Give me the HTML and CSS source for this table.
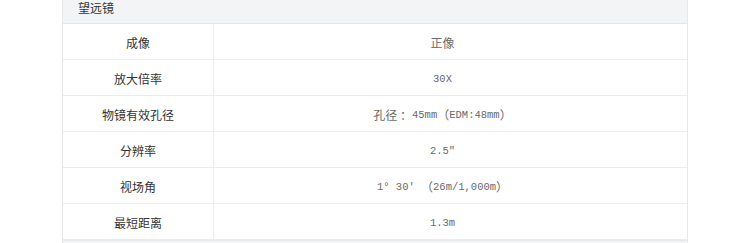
FILE: index.html
```html
<!DOCTYPE html>
<html lang="zh">
<head>
<meta charset="utf-8">
<link rel="stylesheet" href="styles.css">
</head>
<body>
<div class="spec">
  <div class="sec-head">望远镜</div>
  <div class="row"><div class="k">成像</div><div class="v">正像</div></div>
  <div class="row"><div class="k">放大倍率</div><div class="v"><span class="en">30X</span></div></div>
  <div class="row"><div class="k">物镜有效孔径</div><div class="v">孔径 ：<span class="en">45mm</span>（<span class="en">EDM:48mm</span>）</div></div>
  <div class="row"><div class="k">分辨率</div><div class="v"><span class="en">2.5″</span></div></div>
  <div class="row"><div class="k">视场角</div><div class="v"><span class="en">1° 30′ </span>（<span class="en">26m/1,000m</span>）</div></div>
  <div class="row"><div class="k">最短距离</div><div class="v"><span class="en">1.3m</span></div></div>
  <div class="sec-head next"></div>
</div>
</body>
</html>
```
FILE: styles.css
```css
html, body {
  margin: 0;
  padding: 0;
  background: #ffffff;
}
body {
  font-family: "Noto Sans CJK SC", "Noto Sans", sans-serif;
  font-size: 12px;
}
.spec {
  margin-left: 62px;
  width: 626px;
  border-left: 1px solid #e8e8ea;
  border-right: 1px solid #e8e8ea;
  box-sizing: border-box;
}
.sec-head {
  box-sizing: border-box;
  background: #f3f4f6;
  border-bottom: 1px solid #e3e4e6;
  padding: 1px 0 0 15px;
  line-height: 13px;
  color: #333333;
  height: 24px;
}
.sec-head.next {
  border-top: 1px solid #e8e8ea;
  border-bottom: 0;
  height: 10px;
}
.row {
  display: grid;
  grid-template-columns: 151px 1fr;
  height: 36px;
  box-sizing: border-box;
  border-bottom: 1px solid #ececee;
}
.row:last-of-type {
  border-bottom: 0;
}
.k, .v {
  display: flex;
  align-items: center;
  justify-content: center;
  padding-top: 2px;
  white-space: pre;
}
.k {
  color: #333333;
  border-right: 1px solid #ececee;
}
.v {
  color: #6a6a6a;
  padding-right: 16px;
}
.en {
  font-family: "Liberation Mono", "DejaVu Sans Mono", monospace;
  font-size: 10.5px;
}
```
